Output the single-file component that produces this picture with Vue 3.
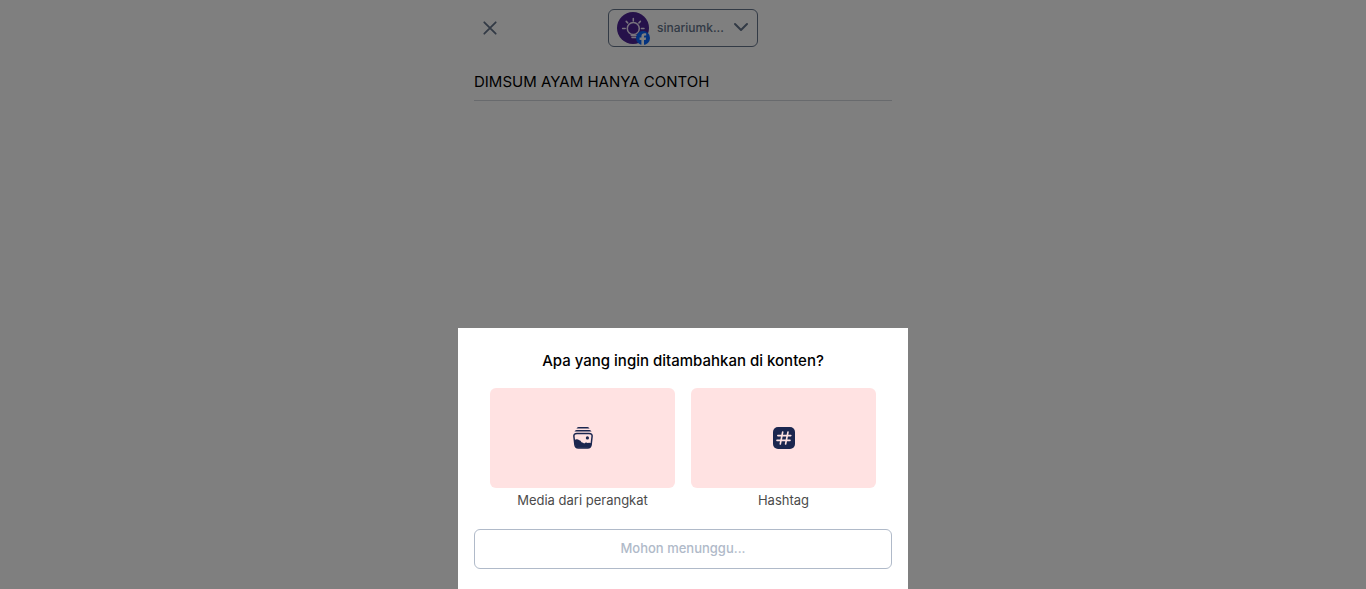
<script setup>
import { ref } from 'vue'

const title = ref('DIMSUM AYAM HANYA CONTOH')
</script>

<template>
  <div class="page">
    <main class="editor">
      <header class="topbar">
        <button class="close" type="button" aria-label="Tutup">
          <svg width="24" height="24" viewBox="0 0 24 24" fill="none" stroke="currentColor" stroke-width="1.8" stroke-linecap="round">
            <path d="M6.3 6.3 17.7 17.7M17.7 6.3 6.3 17.7" />
          </svg>
        </button>
        <button class="account" type="button">
          <span class="avatar">
            <svg width="32" height="32" viewBox="0 0 32 32" fill="none">
              <circle cx="16" cy="16" r="16" fill="#4c2394" />
              <g stroke="#f0e6fa" stroke-width="1.5" stroke-linecap="round">
                <circle cx="16.3" cy="16.5" r="6" />
                <path d="M16.3 6.500v2.500M9.200 9.400l1.500 1.500M23.400 9.400 21.900 10.900M5.600 16.500h2.600M24.400 16.500h2.600M14.300 23.400h5M15 25.400h4" />
              </g>
            </svg>
            <svg class="badge" width="14" height="14" viewBox="0 0 14 14">
              <circle cx="7" cy="7" r="7" fill="#0866ff" />
              <path d="M5.400 14V8.900H3.600V6.600h1.800V5.500c0-2.200 1.100-3.300 3.200-3.300.6 0 1.200.1 1.600.2v2.100H9.200c-.9 0-1.200.4-1.200 1.200v.9h2.100l-.4 2.300H8V14z" fill="#fff" />
            </svg>
          </span>
          <span class="name">sinariumk...</span>
          <svg class="chevron" width="16" height="16" viewBox="0 0 16 16" fill="none" stroke="currentColor" stroke-width="2" stroke-linecap="round" stroke-linejoin="round">
            <path d="m2 4 6 6 6-6" />
          </svg>
        </button>
      </header>
      <input v-model="title" class="title" type="text" aria-label="Judul konten" />
    </main>

    <div class="overlay">
      <section class="sheet" role="dialog" aria-modal="true" aria-labelledby="sheet-title">
        <h2 id="sheet-title">Apa yang ingin ditambahkan di konten?</h2>
        <div class="choices">
          <button class="choice" type="button">
            <span class="tile">
              <svg width="24" height="24" viewBox="0 0 24 24" fill="none">
                <path d="M5.500 2.500Q6 1 7.500 1h9q1.500 0 2 1.500zM3.500 5.500Q4 3.900 5.500 3.900h13q1.500 0 2 1.600z" fill="#1b264f" />
                <path d="M6 7.500h12q3.500 0 3.100 3l-1 8.500q-.4 3-3.400 3H7.300q-3 0-3.400-3l-1-8.500Q2.500 7.500 6 7.500z" stroke="#1b264f" stroke-width="1.500" />
                <path d="M3.300 14.200q2.700-1.800 5 .1 1.400 0 2.200 1.900 1.700.2 2.700 1.300 1.400-1.500 3.500-.6 2.200-.7 3.800.7l-.4 1.900q-.5 2.200-2.900 2.200H7.300q-2.700 0-3.100-2.400z" fill="#1b264f" />
                <circle cx="16.400" cy="11.900" r="1.600" fill="#1b264f" />
              </svg>
            </span>
            <span class="label">Media dari perangkat</span>
          </button>
          <button class="choice" type="button">
            <span class="tile">
              <svg width="24" height="24" viewBox="0 0 24 24" fill="none">
                <rect x="1" y="1" width="22" height="22" rx="5" fill="#1b264f" />
                <path d="m10.700 6-2.400 12M16 6l-2.400 12M5.800 9.600h13M5 14.400h13" stroke="#ffe2e2" stroke-width="1.600" stroke-linecap="round" />
              </svg>
            </span>
            <span class="label">Hashtag</span>
          </button>
        </div>
        <button class="waiting" type="button" disabled>Mohon menunggu...</button>
      </section>
    </div>
  </div>
</template>

<style scoped>
.page {
  min-height: 100vh;
  background: #fff;
  font-family: Inter, "Liberation Sans", sans-serif;
}

button {
  margin: 0;
  padding: 0;
  border: 0;
  background: none;
  font: inherit;
  color: inherit;
}

svg {
  display: block;
  flex: none;
}

.editor {
  box-sizing: border-box;
  max-width: 450px;
  margin: 0 auto;
  padding: 9px 16px 0;
}

.topbar {
  display: grid;
  grid-template-columns: 1fr auto 1fr;
  align-items: center;
  color: #64748b;
}

.close {
  justify-self: start;
  padding: 0 4px;
}

.account {
  box-sizing: border-box;
  display: flex;
  align-items: center;
  width: 150px;
  height: 38px;
  padding: 0 8px;
  border: 1px solid #64748b;
  border-radius: 6px;
}

.avatar {
  position: relative;
  flex: none;
}

.badge {
  position: absolute;
  right: -1px;
  bottom: -1px;
}

.name {
  margin-left: 8px;
  font-size: 12px;
  line-height: 20px;
  font-weight: 500;
}

.chevron {
  margin-left: auto;
}

.title {
  box-sizing: border-box;
  display: block;
  width: 100%;
  height: 38px;
  margin-top: 16px;
  padding: 0;
  border: 0;
  border-bottom: 1px solid #d1d5db;
  background: none;
  outline: none;
  color: #000;
  font: 400 15px/24px Inter, "Liberation Sans", sans-serif;
}

.overlay {
  position: fixed;
  inset: 0;
  display: flex;
  align-items: flex-end;
  justify-content: center;
  background: rgba(0, 0, 0, 0.5);
}

.sheet {
  box-sizing: border-box;
  width: 100%;
  max-width: 450px;
  padding: 20px 16px;
  background: #fff;
}

h2 {
  margin: 0 0 14px;
  font-size: 15px;
  line-height: 26px;
  font-weight: 500;
  text-align: center;
  color: #000;
}

.choices {
  display: grid;
  grid-template-columns: 1fr 1fr;
  gap: 16px;
  padding: 0 16px;
}

.choice {
  display: flex;
  flex-direction: column;
  gap: 2px;
}

.tile {
  display: flex;
  align-items: center;
  justify-content: center;
  align-self: stretch;
  height: 100px;
  border-radius: 6px;
  background: #ffe2e2;
}

.label {
  align-self: center;
  font-size: 13px;
  line-height: 20px;
  color: #4b4b4b;
}

.waiting {
  box-sizing: border-box;
  display: block;
  width: 100%;
  height: 40px;
  margin-top: 19px;
  padding-bottom: 2px;
  border: 1px solid #b0bac9;
  border-radius: 6px;
  font-size: 13px;
  line-height: 20px;
  font-weight: 500;
  color: #b0bac9;
}
</style>

<style>
body {
  margin: 0;
}
</style>
